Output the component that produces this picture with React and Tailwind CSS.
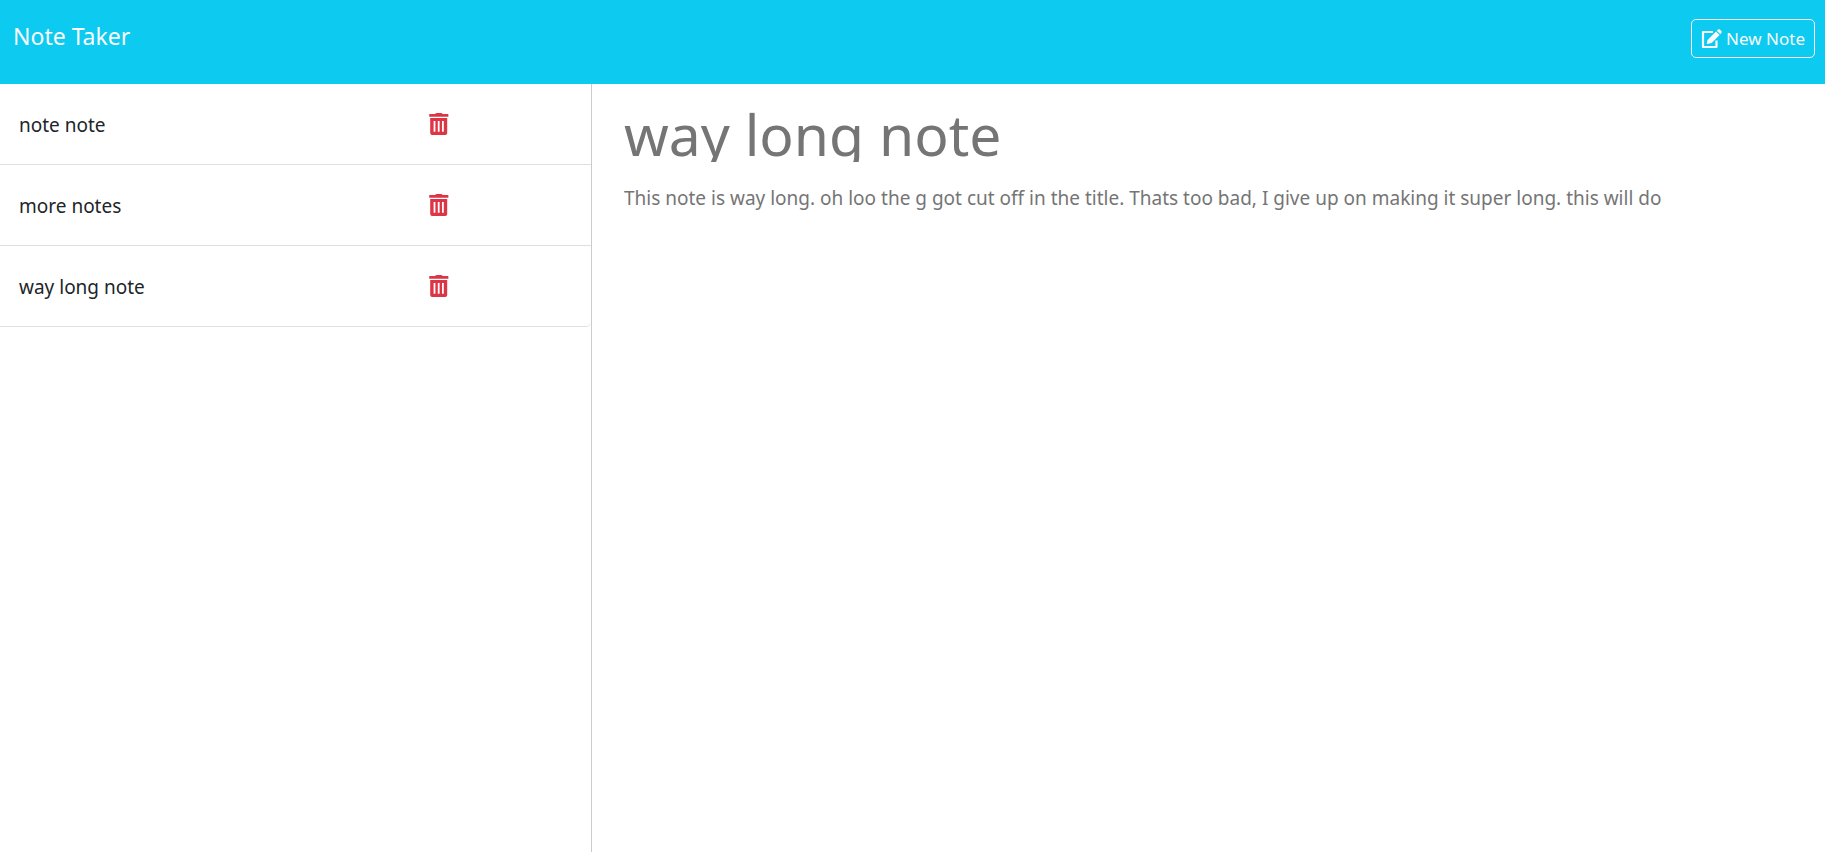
const notes = [
  { id: 1, title: 'note note' },
  { id: 2, title: 'more notes' },
  { id: 3, title: 'way long note' },
];

const activeNote = {
  title: 'way long note',
  text: 'This note is way long. oh loo the g got cut off in the title. Thats too bad, I give up on making it super long. this will do',
};

function EditIcon() {
  return (
    <svg viewBox="0 0 21 20" className="h-5 w-[21px]" fill="none" aria-hidden="true">
      <path d="M12 3H2V18H15.5V11.5" stroke="currentColor" strokeWidth="2.2" strokeLinejoin="round" />
      <path
        d="M15 2.4 18.6 6 10.6 14 6.5 15Q5.6 15.1 5.8 14.3L6.5 10.9ZM15.8 1.7 16.9.6Q17.9-.2 18.9.6L20.3 2Q21.1 3 20.3 4L19.3 5.2Z"
        fill="currentColor"
      />
    </svg>
  );
}

function TrashIcon() {
  return (
    <svg viewBox="0 0 20 22" className="h-[22px] w-5" fill="currentColor" aria-hidden="true">
      <path d="M.7 1H6L6.6.4Q7 0 7.6 0H12.2Q12.8 0 13.2.4L13.8 1H18.9Q19.4 1 19.4 1.6V3.2Q19.4 3.8 18.9 3.8H.7Q.2 3.8.2 3.2V1.6Q.2 1 .7 1Z" />
      <path
        fillRule="evenodd"
        d="M1.2 5H18.2V20Q18.2 22 16.2 22H3.2Q1.2 22 1.2 20ZM4.6 8V18.7H6.4V8ZM8.8 8V18.7H10.6V8ZM13 8V18.7H14.8V8Z"
      />
    </svg>
  );
}

function Header() {
  return (
    <nav className="flex h-[84px] items-start justify-between bg-[#0dcaf0] pr-[10px] pl-[13px]">
      <a href="#" className="mt-[18px] text-[23px] leading-9 text-[#f8f9fa]">
        Note Taker
      </a>
      <button
        type="button"
        className="mt-[19px] flex h-[39px] items-center gap-1 rounded-[5px] border border-[#f8f9fa] px-[9px] text-[17px] text-[#f8f9fa]"
      >
        <EditIcon />
        New Note
      </button>
    </nav>
  );
}

function NoteList() {
  return (
    <aside className="w-[592px] shrink-0 border-r border-[#cccccc]">
      <ul>
        {notes.map((note) => (
          <li
            key={note.id}
            className="flex h-[81px] items-center border-b border-[#dfdfdf] px-[19px] last:rounded-br-[5px]"
          >
            <button type="button" className="w-3/4 pt-px text-left text-[19px] leading-[30px] text-[#212529]">
              {note.title}
            </button>
            <button type="button" aria-label={`Delete ${note.title}`} className="-ml-[5px] text-[#dc3545]">
              <TrashIcon />
            </button>
          </li>
        ))}
      </ul>
    </aside>
  );
}

function NoteEditor() {
  return (
    <main className="flex min-w-0 grow flex-col px-8 pt-[22px]">
      <div className="flex h-14 items-center overflow-hidden">
        <input
          type="text"
          aria-label="Note title"
          defaultValue={activeNote.title}
          className="w-full text-[57px] leading-[80px] text-[#757575] outline-none"
        />
      </div>
      <textarea
        aria-label="Note text"
        defaultValue={activeNote.text}
        className="mt-[21px] w-full grow resize-none text-[19px] leading-[30px] text-[#757575] outline-none"
      />
    </main>
  );
}

export default function App() {
  return (
    <div className="flex min-h-screen flex-col bg-white font-['Noto_Sans','Open_Sans',sans-serif]">
      <Header />
      <div className="flex grow">
        <NoteList />
        <NoteEditor />
      </div>
    </div>
  );
}
